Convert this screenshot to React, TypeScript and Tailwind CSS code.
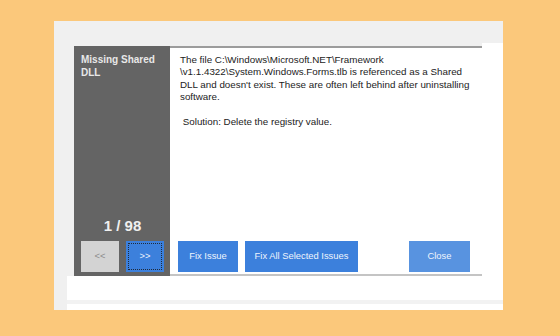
import React from "react";

const font = { fontFamily: '"Liberation Sans", Arial, sans-serif' };

export default function App() {
  return (
    <div className="w-[560px] h-[336px] bg-[#fbc87b] pt-[21px] pl-[54px]" style={font}>
      <div className="w-[449px] h-[289px] bg-[#f0f0f0] flex flex-col">
        <div className="flex h-[255px]">
          <div className="w-[20px]" />
          <div className="w-[408px] mt-[25px] flex">
            <div className="w-[96px] bg-[#646464] flex flex-col pt-[7px] pl-[7px] pr-[6px] pb-[4px]">
              <div className="text-[10px] leading-[13px] font-bold text-[#e8e8e8]">
                Missing Shared
                <br />
                DLL
              </div>
              <div className="mt-auto text-center text-[15px] font-bold text-[#f0f0f0] leading-[18px] mb-[6px]">
                1 / 98
              </div>
              <div className="flex gap-[7px]">
                <div className="w-[38px] h-[31px] bg-[#d3d3d3] flex items-center justify-center text-[9.4px] text-[#8c8c8c]">
                  &lt;&lt;
                </div>
                <div className="w-[38px] h-[31px] bg-[#3c80dc] flex items-center justify-center text-[9.4px] text-[#eef4fc] outline-1 outline-dotted outline-[#1e2a3a] outline-offset-[-3px]">
                  &gt;&gt;
                </div>
              </div>
            </div>
            <div className="flex-1 bg-white border-t-2 border-b-2 border-t-[#9c9c9c] border-b-[#c4c4c4] flex flex-col pt-[6px] pb-[2px]">
              <div className="pl-[10px] text-[9.8px] leading-[12.4px] text-[#1c1c1c] whitespace-pre">
                {"The file C:\\Windows\\Microsoft.NET\\Framework\n\\v1.1.4322\\System.Windows.Forms.tlb is referenced as a Shared\nDLL and doesn't exist. These are often left behind after uninstalling\nsoftware.\n\n Solution: Delete the registry value."}
              </div>
              <div className="mt-auto flex pl-[8px] pr-[12px]">
                <div className="w-[60px] h-[31px] bg-[#3c80dc] flex items-center justify-center text-[9.4px] text-[#eef4fc]">
                  Fix Issue
                </div>
                <div className="ml-[7px] w-[113px] h-[31px] bg-[#3c80dc] flex items-center justify-center text-[9.4px] text-[#eef4fc]">
                  Fix All Selected Issues
                </div>
                <div className="ml-auto w-[61px] h-[31px] bg-[#5893e0] flex items-center justify-center text-[9.4px] text-[#eef4fc]">
                  Close
                </div>
              </div>
            </div>
          </div>
          <div className="w-[21px] mt-[22px] bg-white" />
        </div>
        <div className="flex h-[34px]">
          <div className="w-[13px]" />
          <div className="flex-1 bg-white flex flex-col">
            <div className="h-[24px]" />
            <div className="h-[4px] bg-[#f2f2f2]" />
          </div>
        </div>
      </div>
    </div>
  );
}
